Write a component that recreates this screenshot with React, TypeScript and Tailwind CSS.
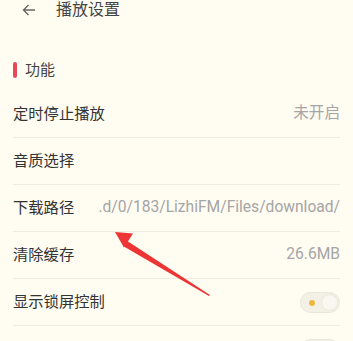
import React from 'react';

interface Row {
  label: string;
  value?: string;
  toggle?: boolean;
}

const rows: Row[] = [
  { label: '定时停止播放', value: '未开启' },
  { label: '音质选择' },
  { label: '下载路径', value: '.d/0/183/LizhiFM/Files/download/' },
  { label: '清除缓存', value: '26.6MB' },
  { label: '显示锁屏控制', toggle: true },
  { label: '', toggle: true },
];

function Toggle() {
  return (
    <div className="relative w-[40px] h-[21px] rounded-full bg-[#f3f0e6] border border-[#e9e6dc]">
      <div className="absolute left-[8px] top-[7px] w-[6px] h-[6px] rounded-full bg-[#ecb83f]" />
      <div className="absolute right-[1px] top-[1px] w-[17px] h-[17px] rounded-full bg-[#f9f7f0] border border-[#ebe8de]" />
    </div>
  );
}

export default function App() {
  return (
    <div
      className="relative w-[353px] h-[341px] overflow-hidden bg-[#fffcf2] text-[#333333]"
      style={{ fontFamily: 'Roboto, "Noto Sans CJK SC", sans-serif' }}
    >
      <div className="h-[20px] flex items-center">
        <svg width="14" height="12" viewBox="0 0 14 12" className="ml-[22px]" fill="none" stroke="#666" strokeWidth="1.4">
          <path d="M13 6H1.5M6.5 1L1.5 6l5 5" />
        </svg>
        <span className="ml-[20px] text-[16px] text-[#444]">播放设置</span>
      </div>

      <div className="mt-[29px] h-[42px] flex items-center pl-[13px]">
        <div className="w-[4px] h-[16px] rounded-sm bg-[#e8485a]" />
        <span className="ml-[8px] text-[15px] text-[#444]">功能</span>
      </div>

      <div className="mx-[13px]">
        {rows.map((row, i) => (
          <div key={i} className="h-[47px] flex items-center justify-between border-b border-[#efece2]">
            <span className="text-[15.3px] text-[#333] whitespace-nowrap">{row.label}</span>
            {row.value && (
              <span className="text-[15.6px] text-[#a5a5a5] whitespace-nowrap ml-4">{row.value}</span>
            )}
            {row.toggle && <Toggle />}
          </div>
        ))}
      </div>

      <svg className="absolute left-0 top-0" width="353" height="341" viewBox="0 0 353 341">
        <polygon points="210,295 126.5,240.5 123,246 209,296" fill="#ee3535" />
        <polygon points="115,232 133,233.5 124,247.5" fill="#ee3535" />
      </svg>
    </div>
  );
}
